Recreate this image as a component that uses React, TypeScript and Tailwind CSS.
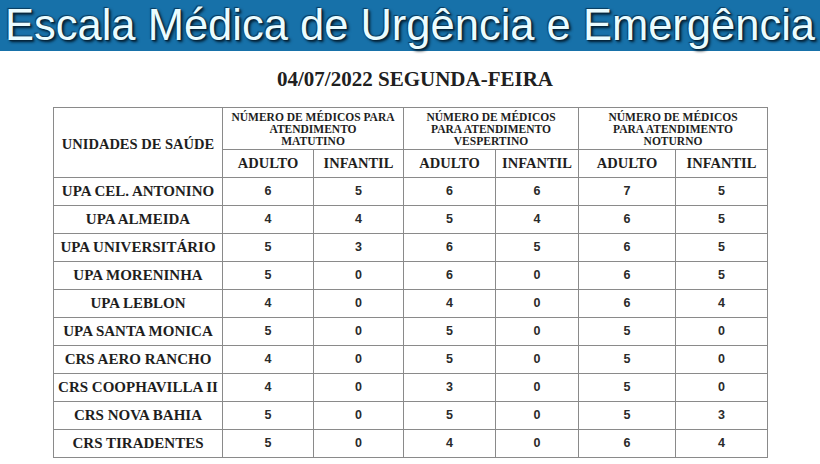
const rows: [string, number[]][] = [
  ['UPA CEL. ANTONINO', [6, 5, 6, 6, 7, 5]],
  ['UPA ALMEIDA', [4, 4, 5, 4, 6, 5]],
  ['UPA UNIVERSITÁRIO', [5, 3, 6, 5, 6, 5]],
  ['UPA MORENINHA', [5, 0, 6, 0, 6, 5]],
  ['UPA LEBLON', [4, 0, 4, 0, 6, 4]],
  ['UPA SANTA MONICA', [5, 0, 5, 0, 5, 0]],
  ['CRS AERO RANCHO', [4, 0, 5, 0, 5, 0]],
  ['CRS COOPHAVILLA II', [4, 0, 3, 0, 5, 0]],
  ['CRS NOVA BAHIA', [5, 0, 5, 0, 5, 3]],
  ['CRS TIRADENTES', [5, 0, 4, 0, 6, 4]],
];

const periodos = [
  ['NÚMERO DE MÉDICOS PARA', 'ATENDIMENTO', 'MATUTINO'],
  ['NÚMERO DE MÉDICOS', 'PARA ATENDIMENTO', 'VESPERTINO'],
  ['NÚMERO DE MÉDICOS', 'PARA ATENDIMENTO', 'NOTURNO'],
];

// bordas cinza como no documento original
const cell = 'border border-[#8a8a8a] text-center align-middle p-0';
const serif = "font-['Liberation_Serif','Times_New_Roman',serif] font-bold text-[#1e1e1e]";

export default function App() {
  return (
    <div className="w-[820px] h-[464px] bg-white overflow-hidden text-[#1e1e1e]">
      {/* faixa de titulo */}
      <div className="h-[51px] bg-[#1771a9] flex items-center pl-[5px]">
        <h1 className="font-['Liberation_Sans',Arial,sans-serif] text-[43.5px] leading-none text-[#eafcff] [text-shadow:1px_1px_1px_#06263c,-1px_-1px_1px_#0b3b5c,2px_2px_3px_#031a2b] whitespace-nowrap">
          Escala Médica de Urgência e Emergência
        </h1>
      </div>

      <div className="h-[56px] flex items-center justify-center pl-[10px]">
        <h2 className="font-['Liberation_Serif','Times_New_Roman',serif] font-bold text-[21px] leading-none text-[#202020]">
          04/07/2022 SEGUNDA-FEIRA
        </h2>
      </div>

      <div className="pl-[53px]">
        <table className="border-collapse table-fixed w-[714px] border border-[#7a7a7a]">
          <colgroup>
            <col className="w-[169px]" />
            <col className="w-[91px]" />
            <col className="w-[90px]" />
            <col className="w-[92px]" />
            <col className="w-[83px]" />
            <col className="w-[97px]" />
            <col className="w-[92px]" />
          </colgroup>
          <thead>
            <tr className="h-[42px]">
              <th rowSpan={2} className={`${cell} ${serif} text-[14.5px] pt-[4px]`}>UNIDADES DE SAÚDE</th>
              {periodos.map((p, i) => (
                <th key={i} colSpan={2} className={`${cell} ${serif} text-[11.5px] leading-[12px]`}>
                  {p.map((l) => (
                    <div key={l}>{l}</div>
                  ))}
                </th>
              ))}
            </tr>
            <tr className="h-[28px]">
              {[0, 1, 2].flatMap((i) => [
                <th key={`a${i}`} className={`${cell} ${serif} text-[14.5px]`}>ADULTO</th>,
                <th key={`i${i}`} className={`${cell} ${serif} text-[14.5px]`}>INFANTIL</th>,
              ])}
            </tr>
          </thead>
          <tbody>
            {rows.map(([nome, vals]) => (
              <tr key={nome} className="h-[28px]">
                <td className={`${cell} ${serif} text-[15px] whitespace-nowrap`}>{nome}</td>
                {vals.map((v, j) => (
                  <td key={j} className={`${cell} font-['Liberation_Sans',Arial,sans-serif] font-bold text-[12.5px] text-[#2a2a2a]`}>
                    {v}
                  </td>
                ))}
              </tr>
            ))}
          </tbody>
        </table>
      </div>
    </div>
  );
}
